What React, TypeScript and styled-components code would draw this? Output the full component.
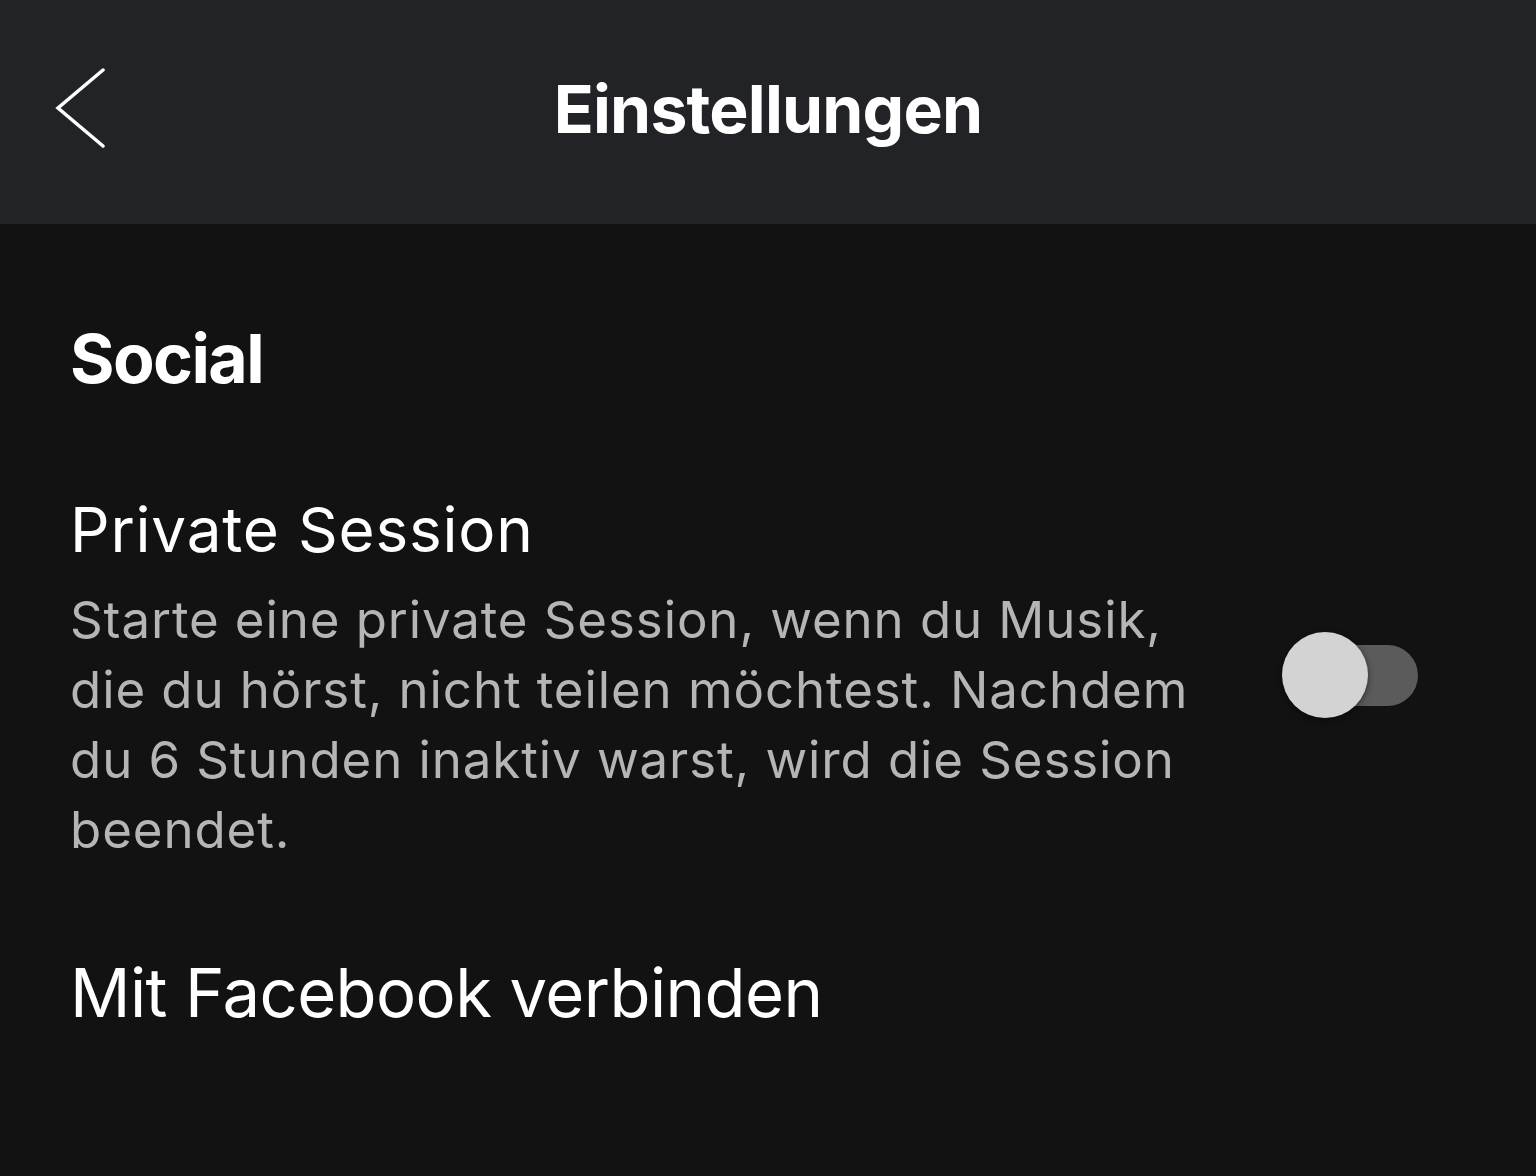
import React from 'react'
import styled, { createGlobalStyle } from 'styled-components'

const GlobalStyle = createGlobalStyle`
	html, body {
		margin: 0;
		padding: 0;
		background: #121212;
	}
	body {
		font-family: Inter, 'Noto Sans', sans-serif;
		font-variant-ligatures: none;
		-webkit-font-smoothing: antialiased;
	}
`

const Page = styled.div`
	width: 1536px;
	height: 1176px;
	background: #121212;
	overflow: hidden;
`

const Header = styled.header`
	height: 224px;
	background: #222327;
	display: grid;
	grid-template-columns: 160px 1fr 160px;
	align-items: center;
`

const BackButton = styled.button`
	border: none;
	background: none;
	padding: 0 0 0 55px;
	display: flex;
	align-items: center;
	height: 100%;
	cursor: pointer;
	margin-top: -8px;
`

const Title = styled.h1`
	margin: -6px 0 0 0;
	text-align: center;
	color: #ffffff;
	font-size: 66px;
	font-weight: 700;
	letter-spacing: -0.8px;
`

const Content = styled.main`
	padding: 95px 70px 0 70px;
`

const SectionTitle = styled.h2`
	margin: 0 0 95px 0;
	color: #ffffff;
	font-size: 68px;
	font-weight: 700;
	line-height: 78px;
	letter-spacing: -1.6px;
`

const Row = styled.div`
	display: flex;
	align-items: center;
	justify-content: space-between;
	margin-bottom: 90px;
`

const RowText = styled.div`
	width: 1140px;
`

const RowTitle = styled.div<{ $size: number }>`
	color: #ffffff;
	font-size: ${p => p.$size}px;
	line-height: 76px;
	letter-spacing: ${p => (p.$size > 64 ? -0.6 : 0.8)}px;
`

const RowDescription = styled.p`
	margin: 17px 0 0 0;
	color: #b5b5b5;
	font-size: 51px;
	line-height: 70px;
	letter-spacing: 0.9px;
`

const Switch = styled.div<{ $on: boolean }>`
	position: relative;
	width: 136px;
	height: 86px;
	margin: 0 48px 8px 0;
	flex-shrink: 0;
`

const Track = styled.div`
	position: absolute;
	left: 16px;
	right: 0;
	top: 13px;
	height: 61px;
	border-radius: 31px;
	background: #5b5b5b;
`

const Thumb = styled.div`
	position: absolute;
	left: 0;
	top: 0;
	width: 86px;
	height: 86px;
	border-radius: 50%;
	background: #d3d3d3;
	box-shadow: 0 2px 6px rgba(0, 0, 0, 0.5);
`

const ChevronLeft = () => (
	<svg width='54' height='80' viewBox='0 0 54 80' fill='none'>
		<path d='M48 2 L3 40 L48 78' stroke='#ffffff' strokeWidth='3.5' strokeLinecap='round' strokeLinejoin='miter' />
	</svg>
)

const App = () => {
	return (
		<Page>
			<GlobalStyle />
			<Header>
				<BackButton aria-label='Zurück'>
					<ChevronLeft />
				</BackButton>
				<Title>Einstellungen</Title>
				<div />
			</Header>
			<Content>
				<SectionTitle>Social</SectionTitle>
				<Row>
					<RowText>
						<RowTitle $size={62}>Private Session</RowTitle>
						<RowDescription>
							Starte eine private Session, wenn du Musik, die du hörst, nicht teilen möchtest. Nachdem du 6 Stunden inaktiv warst, wird die Session beendet.
						</RowDescription>
					</RowText>
					<Switch $on={false}>
						<Track />
						<Thumb />
					</Switch>
				</Row>
				<RowTitle $size={67}>Mit Facebook verbinden</RowTitle>
			</Content>
		</Page>
	)
}

export default App
